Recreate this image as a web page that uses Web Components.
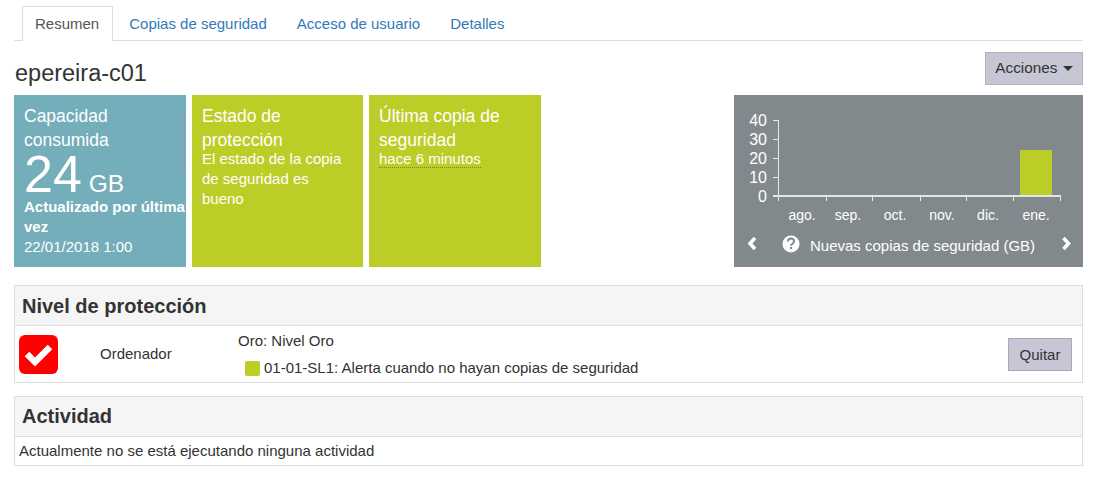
<!DOCTYPE html>
<html lang="es">
<head>
<meta charset="utf-8">
<title>Resumen</title>
<style>
  html, body { margin: 0; background: #fff; }
  body { font-family: "Liberation Sans", Arial, sans-serif; color: #333; }
</style>
</head>
<body>
<summary-page></summary-page>
<script>
class TabBar extends HTMLElement {
  connectedCallback() {
    this.attachShadow({ mode: 'open' });
    this.shadowRoot.innerHTML = `
      <style>
        :host { display: flex; height: 34px; margin-top: 6px; padding-left: 8px; border-bottom: 1px solid #ddd; font-size: 15px; }
        a { display: block; height: 34px; padding: 0 15px; line-height: 35px; box-sizing: border-box; color: #337ab7; text-decoration: none; white-space: nowrap; }
        a.on { color: #555; background: #fff; border: 1px solid #ddd; border-bottom: 0; padding: 0 13px 0 12px; height: 35px; margin-right: 1px; line-height: 34px; }
      </style>
      <a href="#" class="on">Resumen</a>
      <a href="#">Copias de seguridad</a>
      <a href="#">Acceso de usuario</a>
      <a href="#">Detalles</a>
    `;
  }
}

class PageHead extends HTMLElement {
  connectedCallback() {
    this.attachShadow({ mode: 'open' });
    this.shadowRoot.innerHTML = `
      <style>
        :host { display: flex; justify-content: space-between; align-items: flex-start; height: 54px; }
        h1 { margin: 18px 0 0 1px; font-size: 23.5px; line-height: 28px; font-weight: 400; color: #333; }
        button { margin-top: 11px; width: 98px; height: 33px; padding: 0 0 1px; border: 1px solid #b1b1bf; background: #c6c6d4; color: #333; font: 15.3px "Liberation Sans", Arial, sans-serif; }
        i { display: inline-block; margin-left: 1px; vertical-align: 2px; border: 5px solid transparent; border-top-color: #333; border-bottom: 0; }
      </style>
      <h1><slot></slot></h1>
      <button type="button">Acciones <i></i></button>
    `;
  }
}

class InfoTile extends HTMLElement {
  connectedCallback() {
    this.attachShadow({ mode: 'open' });
    this.shadowRoot.innerHTML = `
      <style>
        :host { display: block; box-sizing: border-box; height: 172px; padding: 9px 0 0 10px; background: var(--tile, #bdcd27); color: #fff; overflow: hidden; }
        .t { font-size: 17.5px; line-height: 24px; padding-right: 12px; }
      </style>
      <div class="t">${this.getAttribute('heading')}</div>
      <slot></slot>
    `;
  }
}

class ChartTile extends HTMLElement {
  connectedCallback() {
    this.attachShadow({ mode: 'open' });
    const ticksY = [120, 139, 158, 177, 196];
    const ticksX = [778, 826, 872, 920, 966, 1013, 1060];
    const months = [['ago.', 802], ['sep.', 848], ['oct.', 895], ['nov.', 942], ['dic.', 988], ['ene.', 1036]];
    this.shadowRoot.innerHTML = `
      <style>
        :host { display: block; height: 172px; background: #82898c; color: #fff; }
        svg { display: block; }
        text { font-family: "Liberation Sans", Arial, sans-serif; fill: #fff; }
      </style>
      <svg width="349" height="172" viewBox="734 95 349 172">
        ${ticksY.map((y, i) => `<text x="767" y="${y + 5.5}" font-size="16" text-anchor="end">${(4 - i) * 10}</text>
        <path d="M773 ${y}.5h5" stroke="#e6e8e8"/>`).join('')}
        <rect x="1020" y="150" width="32" height="46" fill="#bdcd27"/>
        <path d="M778.5 120V197" stroke="#e6e8e8" fill="none"/>
        <path d="M773 196H1061" stroke="#e3e6e6" stroke-width="2" fill="none"/>
        ${ticksX.map(x => `<path d="M${x}.5 196v5" stroke="#e6e8e8"/>`).join('')}
        ${months.map(m => `<text x="${m[1]}" y="220" font-size="14" text-anchor="middle">${m[0]}</text>`).join('')}
        <path d="M755 238l-5 5.500 5 5.500" fill="none" stroke="#fff" stroke-width="3.500"/>
        <path d="M1063.500 238l5 5.500-5 5.500" fill="none" stroke="#fff" stroke-width="3.500"/>
        <circle cx="791" cy="244" r="8.500" fill="#fff"/>
        <path d="M788 241.500c0-4 6-4 6 0 0 2.200-3 2.300-3 4.300" fill="none" stroke="#82898c" stroke-width="2"/>
        <rect x="790" y="247" width="2" height="2" fill="#82898c"/>
        <text x="810" y="251" font-size="15">Nuevas copias de seguridad (GB)</text>
      </svg>
    `;
  }
}

class SectionPanel extends HTMLElement {
  connectedCallback() {
    this.attachShadow({ mode: 'open' });
    this.shadowRoot.innerHTML = `
      <style>
        :host { display: block; border: 1px solid #ddd; box-sizing: border-box; }
        h2 { margin: 0; height: 40px; box-sizing: border-box; padding-left: 7px; background: #f5f5f5; border-bottom: 1px solid #ddd; font-size: 20px; line-height: var(--head-line, 40px); font-weight: 700; color: #333; }
      </style>
      <h2>${this.getAttribute('heading')}</h2>
      <slot></slot>
    `;
  }
}

class ProtectionRow extends HTMLElement {
  connectedCallback() {
    this.attachShadow({ mode: 'open' });
    this.shadowRoot.innerHTML = `
      <style>
        :host { display: grid; grid-template-columns: 85px 138px 1fr auto; align-items: center; height: 56px; font-size: 15px; color: #333; }
        svg { display: block; margin-left: 4px; }
        .kind { padding-bottom: 2px; }
        .plan { align-self: start; }
        .plan div:first-child { margin-top: 6px; line-height: 18px; }
        .rule { display: flex; align-items: center; gap: 4px; margin: 9px 0 0 7px; line-height: 18px; }
        .rule i { width: 15px; height: 15px; border-radius: 2px; background: #bdcd27; }
        button { margin-right: 10px; width: 64px; height: 33px; padding: 0; border: 1px solid #a9a9b6; background: #c6c6d4; color: #333; font: 15px "Liberation Sans", Arial, sans-serif; }
      </style>
      <svg width="39" height="39" viewBox="0 0 39 39">
        <rect width="39" height="39" rx="6" fill="#f00"/>
        <path d="M8 19l8 8 15-15" fill="none" stroke="#fff" stroke-width="6.500"/>
      </svg>
      <div class="kind">Ordenador</div>
      <div class="plan">
        <div>Oro: Nivel Oro</div>
        <div class="rule"><i></i><span>01-01-SL1: Alerta cuando no hayan copias de seguridad</span></div>
      </div>
      <button type="button">Quitar</button>
    `;
  }
}

class SummaryPage extends HTMLElement {
  connectedCallback() {
    this.attachShadow({ mode: 'open' });
    this.shadowRoot.innerHTML = `
      <style>
        :host { display: block; box-sizing: border-box; width: 1069px; height: 485px; margin-left: 14px; font-size: 15px; }
        .tiles { display: grid; grid-template-columns: 172px 171px 172px 1fr 349px; column-gap: 6px; }
        .tiles chart-tile { grid-column: 5; }
        .cap { --tile: linear-gradient(#79aabb, #79aabb) 164px 18px / 8px 56px no-repeat, #74aeba; }
        .num { font-size: 52px; line-height: 44px; height: 45px; }
        .num span { font-size: 24.5px; }
        .b { font-weight: 700; line-height: 20px; }
        .l { line-height: 20px; padding-right: 12px; }
        .top { margin-top: -3px; }
        .dot { display: inline-block; line-height: 17px; border-bottom: 1px dotted #7b8a1c; }
        section-panel.p1 { margin-top: 18px; height: 98px; }
        section-panel.p2 { margin-top: 13px; height: 70px; --head-line: 38px; }
        .msg { padding: 5px 0 0 4px; line-height: 18px; color: #333; }
      </style>
      <tab-bar></tab-bar>
      <page-head>epereira-c01</page-head>
      <div class="tiles">
        <info-tile class="cap" heading="Capacidad consumida">
          <div class="num">24<span> GB</span></div>
          <div class="b">Actualizado por última vez</div>
          <div class="l">22/01/2018 1:00</div>
        </info-tile>
        <info-tile heading="Estado de protección">
          <div class="l top">El estado de la copia de seguridad es bueno</div>
        </info-tile>
        <info-tile heading="Última copia de seguridad">
          <div class="l top"><span class="dot">hace 6 minutos</span></div>
        </info-tile>
        <chart-tile></chart-tile>
      </div>
      <section-panel class="p1" heading="Nivel de protección"><protection-row></protection-row></section-panel>
      <section-panel class="p2" heading="Actividad"><div class="msg">Actualmente no se está ejecutando ninguna actividad</div></section-panel>
    `;
  }
}

customElements.define('tab-bar', TabBar);
customElements.define('page-head', PageHead);
customElements.define('info-tile', InfoTile);
customElements.define('chart-tile', ChartTile);
customElements.define('section-panel', SectionPanel);
customElements.define('protection-row', ProtectionRow);
customElements.define('summary-page', SummaryPage);
</script>
</body>
</html>
